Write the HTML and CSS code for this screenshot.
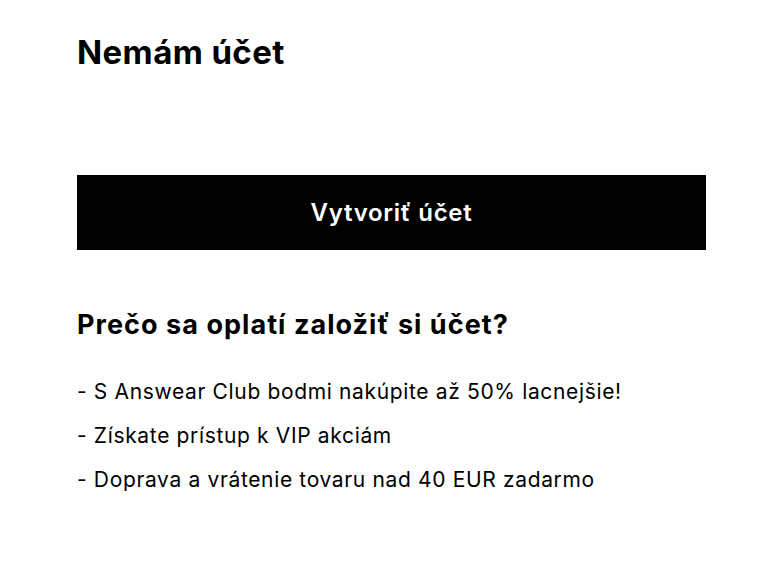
FILE: index.html
```html
<!DOCTYPE html>
<html lang="sk">
<head>
<meta charset="utf-8">
<link rel="stylesheet" href="styles.css">
</head>
<body>
<main class="panel">
  <h1 class="title">Nemám účet</h1>
  <button class="create-btn" type="button">Vytvoriť účet</button>
  <h2 class="subtitle">Prečo sa oplatí založiť si účet?</h2>
  <ul class="benefits">
    <li>- S Answear Club bodmi nakúpite až 50% lacnejšie!</li>
    <li>- Získate prístup k VIP akciám</li>
    <li>- Doprava a vrátenie tovaru nad 40 EUR zadarmo</li>
  </ul>
</main>
</body>
</html>
```

FILE: styles.css
```css
html, body {
  margin: 0;
  padding: 0;
  background: #fff;
}
body {
  font-family: Inter, "Noto Sans", sans-serif;
  color: #000;
}
.panel {
  width: 629px;
  padding: 0 0 0 77px;
  display: flex;
  flex-direction: column;
}
.title {
  margin: 32px 0 0;
  font-size: 33px;
  line-height: 40px;
  font-weight: 700;
  letter-spacing: 0.4px;
}
.create-btn {
  margin-top: 103px;
  height: 75px;
  width: 100%;
  border: 0;
  background: #000;
  color: #fff;
  font-family: inherit;
  font-size: 24px;
  font-weight: 600;
  letter-spacing: 0.7px;
  cursor: pointer;
}
.subtitle {
  margin: 58px 0 0;
  font-size: 27px;
  line-height: 34px;
  font-weight: 700;
  letter-spacing: 1.05px;
}
.benefits {
  list-style: none;
  margin: 28px 0 0;
  padding: 0;
  font-size: 21px;
  line-height: 44px;
  letter-spacing: 0.65px;
}
```
